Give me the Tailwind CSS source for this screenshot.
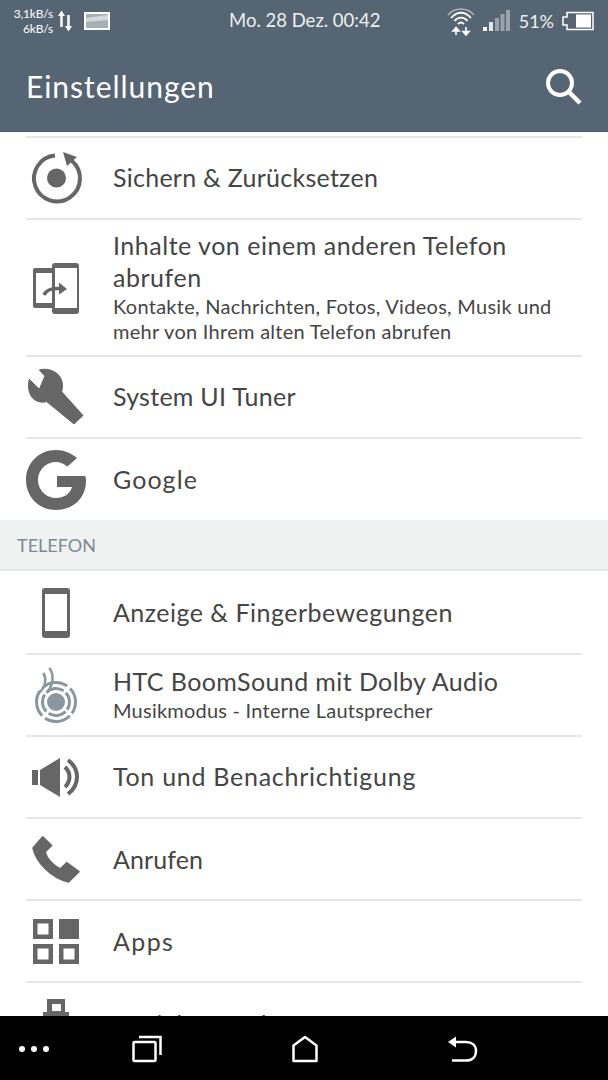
<!DOCTYPE html>
<html lang="de">
  <head>
    <meta charset="UTF-8" />
    <meta name="viewport" content="width=device-width, initial-scale=1.0" />
    <title>Einstellungen</title>
    <script src="https://cdn.jsdelivr.net/npm/@tailwindcss/browser@4"></script>
  </head>
  <body class="bg-white">
    <div class="w-[608px] h-[1080px] flex flex-col overflow-hidden font-['Lato',sans-serif] text-[#454545]">
      <!-- Header -->
      <div class="h-[132px] shrink-0 bg-[#566573] text-white border-b border-[#4c5a67]">
        <div class="h-[42px] flex items-center">
          <div class="w-[53px] text-right text-[12px] leading-[15px] tracking-[-0.2px]">
            <div>3,1kB/s</div>
            <div>6kB/s</div>
          </div>
          <svg class="ml-[5px]" width="14" height="22" viewBox="0 0 14 22" fill="white" stroke="white" stroke-width="2.500">
            <path d="M3.500 17V5" />
            <path d="M0 6L3.500 0.500L7 6Z" stroke="none" />
            <path d="M10.500 5V17" />
            <path d="M7 16L10.500 21.500L14 16Z" stroke="none" />
          </svg>
          <svg class="ml-[12px]" width="26" height="18" viewBox="0 0 26 18">
            <rect x="1" y="1" width="24" height="16" fill="#a9b0b5" stroke="white" stroke-width="2" />
            <path d="M2 6L24 3V8L2 10Z" fill="#d5d8da" />
          </svg>
          <div class="ml-[119px] text-[18.500px] text-[#eef0f1] whitespace-nowrap">Mo. 28 Dez. 00:42</div>
          <svg class="ml-auto" width="28" height="30" viewBox="0 0 28 30" fill="none" stroke="white">
            <path d="M1 9C8 1 20 1 27 9" stroke="#aeb5bb" stroke-width="1.500" />
            <path d="M4 12C10 5 18 5 24 12" stroke-width="1.800" />
            <path d="M7.500 15C11 10.500 17 10.500 20.500 15" stroke-width="1.800" />
            <path d="M11 18C13 16 15 16 17 18" stroke-width="1.800" />
            <path d="M9 29V24M6 25L9 21.500L12 25H6ZM19 21V26M16 25.500L19 29L22 25.500H16Z" stroke-width="1.600" fill="white" />
          </svg>
          <svg class="ml-[8px]" width="27" height="22" viewBox="0 0 27 22">
            <rect x="0" y="17" width="4" height="4" fill="white" />
            <rect x="6" y="12" width="4" height="9" fill="#e4e7e9" />
            <rect x="12" y="8" width="4" height="13" fill="#9aa3aa" />
            <rect x="17.500" y="4" width="4" height="17" fill="#9aa3aa" />
            <rect x="23" y="0" width="4" height="21" fill="#9aa3aa" />
          </svg>
          <div class="ml-[9px] text-[18px] text-[#eef0f1]">51%</div>
          <svg class="ml-[8px] mr-[14px]" width="32" height="20" viewBox="0 0 32 20" fill="none">
            <path d="M5 1.500H31V18.500H5V14H1V6H5Z" stroke="white" stroke-width="1.500" />
            <rect x="14" y="3.500" width="15" height="13" fill="white" />
          </svg>
        </div>
        <div class="h-[89px] flex items-center justify-between pl-[26px] pr-[26px]">
          <h1 class="text-[30px] leading-none tracking-[0.96px] pb-[1px]">Einstellungen</h1>
          <svg width="36" height="36" viewBox="0 0 36 36" fill="none" stroke="white">
            <circle cx="14" cy="14" r="12" stroke-width="4" />
            <path d="M23 23L34 34" stroke-width="4.500" />
          </svg>
        </div>
      </div>

      <!-- Settings list -->
      <div class="flex-1 min-h-0 overflow-hidden">
        <div class="h-[6px] mx-[26px] border-b-2 border-[#e6e6e6]"></div>

        <div class="mx-[26px] h-[82px] border-b-2 border-[#e6e6e6] flex items-center">
          <svg class="w-[60px] h-[60px] mr-[27px] shrink-0" viewBox="0 0 60 60" fill="none">
            <path d="M29 7.500A23 23 0 1 0 46 13" stroke="#666" stroke-width="4" />
            <path d="M37 4L51 9L41 18Z" fill="#666" />
            <circle cx="30.500" cy="30" r="9.500" fill="#666" />
          </svg>
          <div class="text-[25px] tracking-[0.26px]">Sichern &amp; Zurücksetzen</div>
        </div>

        <div class="mx-[26px] h-[137px] border-b-2 border-[#e6e6e6] flex items-center">
          <svg class="w-[60px] h-[60px] mr-[27px] shrink-0" viewBox="0 0 60 60" fill="none">
            <rect x="7" y="10" width="24" height="40" rx="2" fill="#666" />
            <rect x="10" y="15" width="19" height="30" fill="white" />
            <rect x="26" y="5" width="27" height="51" rx="3" fill="#666" />
            <rect x="29" y="10" width="22" height="40" fill="white" />
            <path d="M18 37C20 32 26 30 34 30.500" stroke="#666" stroke-width="3.500" />
            <path d="M33 24.500L41 31L33 36.500Z" fill="#666" />
          </svg>
          <div class="w-[469px] pb-[3px]">
            <div class="text-[25px] leading-[32px] tracking-[0.52px]">Inhalte von einem anderen Telefon abrufen</div>
            <div class="mt-[1px] text-[20px] leading-[25px] tracking-[0.28px]">Kontakte, Nachrichten, Fotos, Videos, Musik und mehr von Ihrem alten Telefon abrufen</div>
          </div>
        </div>

        <div class="mx-[26px] h-[82px] border-b-2 border-[#e6e6e6] flex items-center">
          <svg class="w-[60px] h-[60px] mr-[27px] shrink-0" viewBox="0 0 60 60">
            <path d="M13.300 3L19 9L13.300 22.300L3.300 12.300C1 22 4 30 9 33C13 35.500 17 35.500 20.600 34.600L48 57L57 48.500L35.700 24.700C37.500 19 36.500 13 33 8.500C28 3 20 1 13.300 3Z" fill="#666" stroke="#666" stroke-linejoin="round" />
          </svg>
          <div class="text-[25px] tracking-[0.27px]">System UI Tuner</div>
        </div>

        <div class="mx-[26px] h-[81px] flex items-center">
          <svg class="w-[60px] h-[60px] mr-[27px] shrink-0" viewBox="0 0 60 60">
            <path d="M30 0C38 0 45 3 51 8L41.500 16.500C38 14 34 12 30 12C20 12 12 20 12 30C12 40 20 48 30 48C38 48 44 44 46 37H31V26H59C60 28 60 29 60 31C60 48 47 60 30 60C13 60 0 47 0 30C0 13 13 0 30 0Z" fill="#666" />
          </svg>
          <div class="text-[25px] tracking-[1.07px]">Google</div>
        </div>

        <div class="h-[51px] bg-[#f0f1f1] border-b-2 border-[#e6e6e6] flex items-center pl-[17px] pt-[2px] text-[18px] text-[#7d8b95]">TELEFON</div>

        <div class="mx-[26px] h-[84px] pt-[2px] border-b-2 border-[#e6e6e6] flex items-center">
          <svg class="w-[60px] h-[60px] mr-[27px] shrink-0" viewBox="0 0 60 60">
            <rect x="16" y="5" width="28" height="50" rx="3" fill="#666" />
            <rect x="19" y="11" width="22" height="37" fill="white" />
          </svg>
          <div class="text-[25px] tracking-[0.48px]">Anzeige &amp; Fingerbewegungen</div>
        </div>

        <div class="mx-[26px] h-[82px] pt-[2px] border-b-2 border-[#e6e6e6] flex items-center">
          <svg class="w-[60px] h-[60px] mr-[27px] shrink-0" viewBox="0 0 60 60" fill="none" stroke="#8a97a1">
            <circle cx="30" cy="36" r="9" fill="#8a97a1" stroke="none" />
            <circle cx="30" cy="36" r="13.500" stroke-width="3" stroke-dasharray="18.200 3" transform="rotate(45 30 36)" />
            <circle cx="30" cy="36" r="19.500" stroke-width="3" stroke-dasharray="26.600 4" transform="rotate(45 30 36)" />
            <path d="M23.300 2C28 8 28 18 20.700 27" stroke-width="2.500" />
            <path d="M17.300 7C20.500 12 20 20 14 26" stroke-width="2.500" />
          </svg>
          <div class="pb-[4px]">
            <div class="text-[25px] leading-[30px] tracking-[0.4px]">HTC BoomSound mit Dolby Audio</div>
            <div class="mt-[2px] text-[20px] leading-[25px] tracking-[0.23px]">Musikmodus - Interne Lautsprecher</div>
          </div>
        </div>

        <div class="mx-[26px] h-[82px] border-b-2 border-[#e6e6e6] flex items-center">
          <svg class="w-[60px] h-[60px] mr-[27px] shrink-0" viewBox="0 0 60 60" fill="none">
            <rect x="6" y="23" width="6" height="15" fill="#666" />
            <path d="M14 23L34 11V50L14 38Z" fill="#666" />
            <path d="M39 20C45 26 45 34 39 40M42 13C54 22 54 38 42 47" stroke="#666" stroke-width="4" />
          </svg>
          <div class="text-[25px] tracking-[0.73px]">Ton und Benachrichtigung</div>
        </div>

        <div class="mx-[26px] h-[82px] pt-[2px] border-b-2 border-[#e6e6e6] flex items-center">
          <svg class="w-[60px] h-[60px] mr-[27px] shrink-0" viewBox="0 0 60 60">
            <path d="M16.700 6.700L25.700 15.500L19 22C21 28 27 35 34 39L40.700 32.700L53 41.700L42.500 52C25 48 10 32 7 18Z" fill="#666" stroke="#666" stroke-width="1.500" stroke-linejoin="round" />
          </svg>
          <div class="text-[25px] tracking-[0.1px]">Anrufen</div>
        </div>

        <div class="mx-[26px] h-[82px] pt-[2px] border-b-2 border-[#e6e6e6] flex items-center">
          <svg class="w-[60px] h-[60px] mr-[27px] shrink-0" viewBox="0 0 60 60" fill="none" stroke="#666" stroke-width="4.500">
            <rect x="9.250" y="9.250" width="15.500" height="15.500" />
            <rect x="33" y="7" width="20" height="20" fill="#666" stroke="none" />
            <rect x="9.250" y="34.250" width="15.500" height="15.500" />
            <rect x="35.250" y="34.250" width="15.500" height="15.500" />
          </svg>
          <div class="text-[25px] tracking-[1.4px]">Apps</div>
        </div>

        <div class="mx-[26px] h-[82px] pt-[2px] flex items-center">
          <svg class="w-[60px] h-[60px] mr-[27px] shrink-0" viewBox="0 0 60 60">
            <path d="M21 4H39V17H43V32H17V17H21ZM26 9V16H35V9Z" fill="#666" fill-rule="evenodd" />
          </svg>
          <div class="text-[25px] tracking-[1px]">Speicher und USB</div>
        </div>
      </div>

      <!-- Navigation bar -->
      <div class="h-[64px] shrink-0 bg-black flex items-center pl-[19px] pt-[1px]">
        <div class="flex gap-[6px]">
          <div class="w-[6px] h-[6px] rounded-full bg-white"></div>
          <div class="w-[6px] h-[6px] rounded-full bg-white"></div>
          <div class="w-[6px] h-[6px] rounded-full bg-white"></div>
        </div>
        <svg class="ml-[83px]" width="30" height="28" viewBox="0 0 30 28" fill="none" stroke="white" stroke-width="2.500">
          <rect x="1.500" y="7" width="22" height="19" rx="1" />
          <path d="M7 2H28.500V20" />
        </svg>
        <svg class="ml-[130px]" width="26" height="28" viewBox="0 0 26 28" fill="none" stroke="white" stroke-width="2.500" stroke-linejoin="round">
          <path d="M1.500 10.500L13 2L24.500 10.500V26H1.500Z" />
        </svg>
        <svg class="ml-[130px]" width="30" height="28" viewBox="0 0 30 28" fill="none" stroke="white" stroke-width="2.500">
          <path d="M5 7H18C24 7 28 10.500 28 16C28 22 24 25.500 18 25.500H4" />
          <path d="M0 7L8 1.500V12.500Z" fill="white" stroke="none" />
        </svg>
      </div>
    </div>
  </body>
</html>
